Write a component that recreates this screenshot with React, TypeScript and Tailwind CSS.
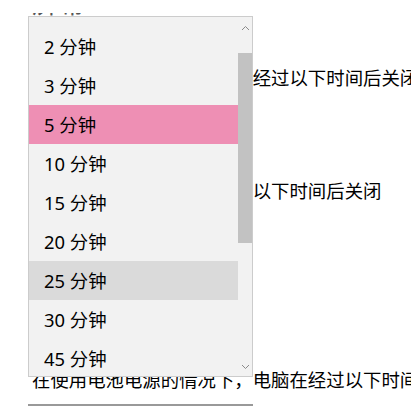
import React from 'react';

const FONT = { fontFamily: '"Noto Sans", "Noto Sans CJK SC", sans-serif' };

const OPTIONS = ['2 分钟', '3 分钟', '5 分钟', '10 分钟', '15 分钟', '20 分钟', '25 分钟', '30 分钟', '45 分钟'];

function Chevron({ up }: { up?: boolean }) {
  return (
    <svg width="9" height="6" viewBox="0 0 9 6" fill="none" stroke="#8a8a8a" strokeWidth="1">
      {up ? <path d="M1 5 L4.5 1.5 L8 5" /> : <path d="M1 1 L4.5 4.5 L8 1" />}
    </svg>
  );
}

export default function App() {
  return (
    <div className="relative w-[411px] h-[406px] overflow-hidden bg-white text-black" style={FONT}>
      <div className="flex flex-col pl-[32px]">
        {/* only the bottom edge of the heading peeks out above the popup */}
        <div className="mt-[13px] h-[3px] overflow-hidden">
          <div className="-mt-[25px] h-[30px] text-[27px] leading-[30px] text-[#555]">屏幕</div>
        </div>
        <div className="mt-[49px] text-[18.4px] leading-[26px] whitespace-nowrap">在使用电池电源的情况下，经过以下时间后关闭</div>
        <div className="w-[221px] h-[32px] mt-[12px] border-2 border-[#999]" />
        <div className="mt-[43px] text-[18.4px] leading-[26px] whitespace-nowrap">在接通电源的情况下，经过以下时间后关闭</div>
        <div className="w-[221px] h-[32px] mt-[12px] border-2 border-[#999]" />
        <div className="mt-[30px] text-[26px] leading-[30px]">睡眠</div>
        <div className="mt-[59px] text-[18.4px] leading-[26px] whitespace-nowrap">在使用电池电源的情况下，电脑在经过以下时间后进入睡眠状态</div>
        <div className="-ml-[4px] w-[225px] h-[32px] mt-[11px] border-t-[3px] border-[#999]" />
      </div>

      <div className="absolute left-[28px] top-[16px] w-[225px] h-[361px] border border-[#cccccc] bg-[#f2f2f2] flex">
        <div className="flex-1 pt-[10px] overflow-hidden">
          {OPTIONS.map((o) => (
            <div
              key={o}
              className={`h-[39px] flex items-center pl-[15px] text-[18.4px] ${
                o === '5 分钟' ? 'bg-[#ee8fb4]' : o === '25 分钟' ? 'bg-[#dadada]' : ''
              }`}
            >
              {o}
            </div>
          ))}
        </div>
        <div className="w-[14px] flex flex-col items-center">
          <div className="h-[16px] flex items-end justify-center pb-[2px]">
            <Chevron up />
          </div>
          <div className="h-[20px]" />
          <div className="w-[14px] h-[190px] bg-[#c2c2c2]" />
          <div className="flex-1" />
          <div className="h-[12px] flex items-start justify-center">
            <Chevron />
          </div>
        </div>
      </div>
    </div>
  );
}
